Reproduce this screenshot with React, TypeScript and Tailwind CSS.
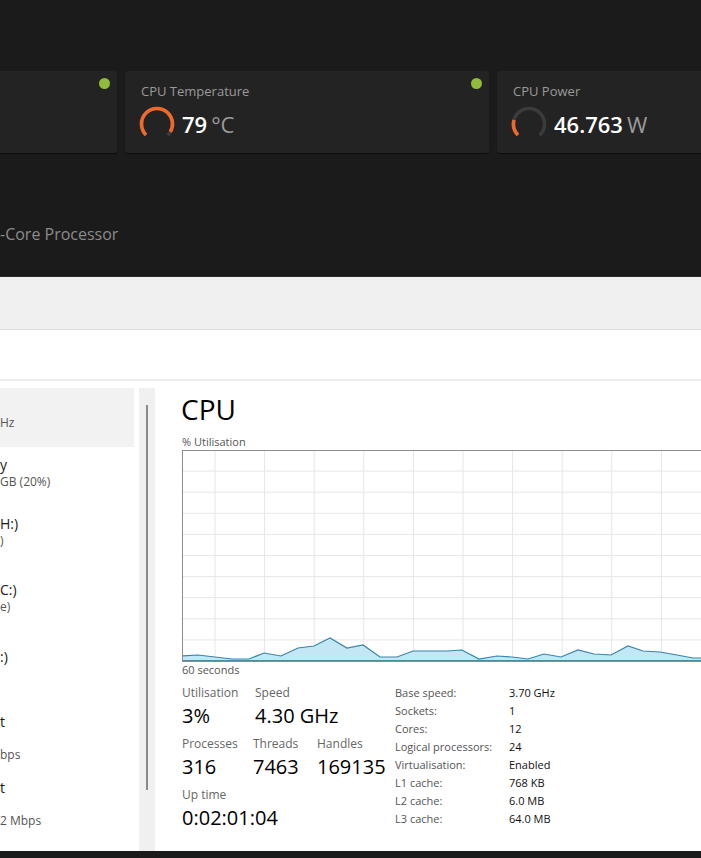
import React from "react";

const pts: [number, number][] = [
  [182, 656], [198, 655], [215, 657], [232, 659], [249, 659], [264, 653], [281, 656],
  [298, 648], [314, 646], [330, 638], [347, 648], [363, 645], [380, 657], [397, 657],
  [413, 651], [430, 651], [447, 651], [462, 650], [479, 659], [497, 656], [512, 657],
  [528, 659], [544, 654], [561, 657], [578, 650], [594, 654], [611, 655], [628, 646],
  [643, 651], [660, 652], [677, 655], [693, 658], [710, 658], [727, 658],
];

function Gauge({ frac }: { frac: number }) {
  const r = 15.5;
  const c = 2 * Math.PI * r;
  const track = c * 0.75;
  return (
    <svg width="36" height="36" viewBox="0 0 36 36">
      <circle
        cx="18" cy="18" r={r} fill="none" stroke="#3b3b3b" strokeWidth="3.6"
        strokeDasharray={`${track} ${c}`} transform="rotate(135 18 18)"
      />
      <circle
        cx="18" cy="18" r={r} fill="none" stroke="#f0692a" strokeWidth="3.6"
        strokeDasharray={`${track * frac} ${c}`} transform="rotate(135 18 18)"
      />
    </svg>
  );
}

function Card({ title, value, unit, frac, dot }: { title?: string; value?: string; unit?: string; frac?: number; dot?: boolean }) {
  return (
    <div className="relative w-[364px] h-[82px] shrink-0 bg-[#232323] rounded-[3px] pl-[14px] pt-[11px] shadow-[0_1px_1px_rgba(0,0,0,0.5)]">
      {dot && <div className="absolute top-[7px] right-[7px] w-[11px] h-[11px] rounded-full bg-[#8fbc3c]" />}
      {title && (
        <>
          <div className="text-[13px] leading-[18px] text-[#9a9a9a] pl-[2px]">{title}</div>
          <div className="flex items-center mt-[6px] gap-[7px]">
            <Gauge frac={frac ?? 0} />
            <div className="flex items-baseline text-[22px] leading-[28px]">
              <span className="text-white font-semibold">{value}</span>
              <span className="text-[#9b9b9b] ml-[4px]">{unit}</span>
            </div>
          </div>
        </>
      )}
    </div>
  );
}

const gridX = Array.from({ length: 12 }, (_, k) => 32 + 49.6 * k);
const gridY = Array.from({ length: 9 }, (_, k) => 21.1 * (k + 1) - 1);

function Graph() {
  const p = pts.map(([x, y]) => [x - 183, y - 451]);
  const line = p.map(([x, y]) => `${x},${y}`).join(" ");
  const poly = `${p[0][0]},210 ${line} ${p[p.length - 1][0]},210`;
  return (
    <div className="w-[600px] h-[212px] border border-[#8c8c8c] bg-white">
      <svg width="598" height="210" className="block">
        {gridX.map((x, i) => (
          <line key={"x" + i} x1={x} y1={0} x2={x} y2={210} stroke="#e6e6e6" strokeWidth="1" />
        ))}
        {gridY.map((y, i) => (
          <line key={"y" + i} x1={0} y1={y} x2={598} y2={y} stroke="#e6e6e6" strokeWidth="1" />
        ))}
        <polygon points={poly} fill="#c3e7f5" />
        <polyline points={line} fill="none" stroke="#3b84a6" strokeWidth="1.2" />
        <line x1={0} y1={209.5} x2={598} y2={209.5} stroke="#4f8aa4" strokeWidth="1" />
      </svg>
    </div>
  );
}

function SideItem({ h, title, sub1, sub2, selected }: { h: number; title?: string; sub1?: string; sub2?: string; selected?: boolean }) {
  return (
    <div
      className={`w-[134px] overflow-hidden ${selected ? "bg-[#f2f2f2]" : ""}`}
      style={{ height: h }}
    >
      <div className="pt-[8px]">
        <div className="text-[14px] leading-[19px] text-[#1a1a1a] h-[19px] whitespace-nowrap">{title ?? ""}</div>
        <div className="text-[12px] leading-[16px] text-[#555] h-[16px] whitespace-nowrap">{sub1 ?? ""}</div>
        {sub2 !== undefined && (
          <div className="text-[12px] leading-[16px] text-[#555] h-[16px] whitespace-nowrap">{sub2}</div>
        )}
      </div>
    </div>
  );
}

const specs: [string, string][] = [
  ["Base speed:", "3.70 GHz"],
  ["Sockets:", "1"],
  ["Cores:", "12"],
  ["Logical processors:", "24"],
  ["Virtualisation:", "Enabled"],
  ["L1 cache:", "768 KB"],
  ["L2 cache:", "6.0 MB"],
  ["L3 cache:", "64.0 MB"],
];

export default function App() {
  return (
    <div className="w-[701px] h-[858px] overflow-hidden bg-white font-['Open_Sans','Noto_Sans',sans-serif]">
      {/* dark header */}
      <div className="h-[277px] bg-[#1b1b1b] pt-[71px] overflow-hidden border-b border-[#2a2a2a]">
        <div className="flex gap-[8px] ml-[-247px]">
          <Card dot />
          <Card title="CPU Temperature" value="79" unit="°C" frac={0.94} dot />
          <Card title="CPU Power" value="46.763" unit="W" frac={0.22} dot />
        </div>
        <div className="mt-[70px] text-[16px] leading-[22px] font-medium text-[#8b8b8b] whitespace-nowrap">-Core Processor</div>
      </div>
      {/* light bands */}
      <div className="h-[53px] bg-[#f0f0f0] border-b border-[#dcdcdc]" />
      <div className="h-[51px] bg-white border-b-2 border-[#ececec]" />
      {/* content */}
      <div className="flex h-[470px]">
        <div className="w-[139px] pt-[7px] shrink-0">
          <SideItem h={59} selected sub1="Hz" />
          <SideItem h={59} title="y" sub1="GB (20%)" />
          <SideItem h={66} title="H:)" sub1=")" />
          <SideItem h={67} title="C:)" sub1="e)" />
          <SideItem h={65} title=":)" />
          <SideItem h={66} title="t" sub2="bps" />
          <SideItem h={66} title="t" sub2="2 Mbps" />
        </div>
        <div className="w-[16px] shrink-0 mt-[7px] bg-[#f0f0f0] flex justify-center">
          <div className="w-[2px] h-[385px] mt-[17px] bg-[#8a8a8a]" />
        </div>
        <div className="flex-1 pl-[27px] pt-[14px] min-w-0">
          <div className="text-[28px] leading-[28px] text-black -ml-[1px]">CPU</div>
          <div className="mt-[11px] text-[11px] leading-[16px] text-[#555]">% Utilisation</div>
          <Graph />
          <div className="text-[11px] leading-[16px] text-[#555]">60 seconds</div>
          <div className="flex mt-[6px]">
            <div className="w-[213px] shrink-0">
              <div className="flex">
                <div className="w-[73px]">
                  <div className="text-[12px] leading-[18px] text-[#666]">Utilisation</div>
                  <div className="mt-[2px] text-[20px] leading-[24px] text-black">3%</div>
                </div>
                <div>
                  <div className="text-[12px] leading-[18px] text-[#666]">Speed</div>
                  <div className="mt-[2px] text-[20px] leading-[24px] text-black whitespace-nowrap">4.30 GHz</div>
                </div>
              </div>
              <div className="flex mt-[7px]">
                <div className="w-[71px]">
                  <div className="text-[12px] leading-[18px] text-[#666]">Processes</div>
                  <div className="mt-[2px] text-[20px] leading-[24px] text-black">316</div>
                </div>
                <div className="w-[64px]">
                  <div className="text-[12px] leading-[18px] text-[#666]">Threads</div>
                  <div className="mt-[2px] text-[20px] leading-[24px] text-black">7463</div>
                </div>
                <div>
                  <div className="text-[12px] leading-[18px] text-[#666]">Handles</div>
                  <div className="mt-[2px] text-[20px] leading-[24px] text-black">169135</div>
                </div>
              </div>
              <div className="mt-[7px]">
                <div className="text-[12px] leading-[18px] text-[#666]">Up time</div>
                <div className="mt-[2px] text-[20px] leading-[24px] text-black">0:02:01:04</div>
              </div>
            </div>
            <div className="flex flex-col">
              {specs.map(([k, v]) => (
                <div key={k} className="flex text-[11px] leading-[18px] whitespace-nowrap">
                  <div className="w-[114px] text-[#555]">{k}</div>
                  <div className="text-[#111]">{v}</div>
                </div>
              ))}
            </div>
          </div>
        </div>
      </div>
      <div className="h-[7px] bg-[#1b1b1b]" />
    </div>
  );
}
